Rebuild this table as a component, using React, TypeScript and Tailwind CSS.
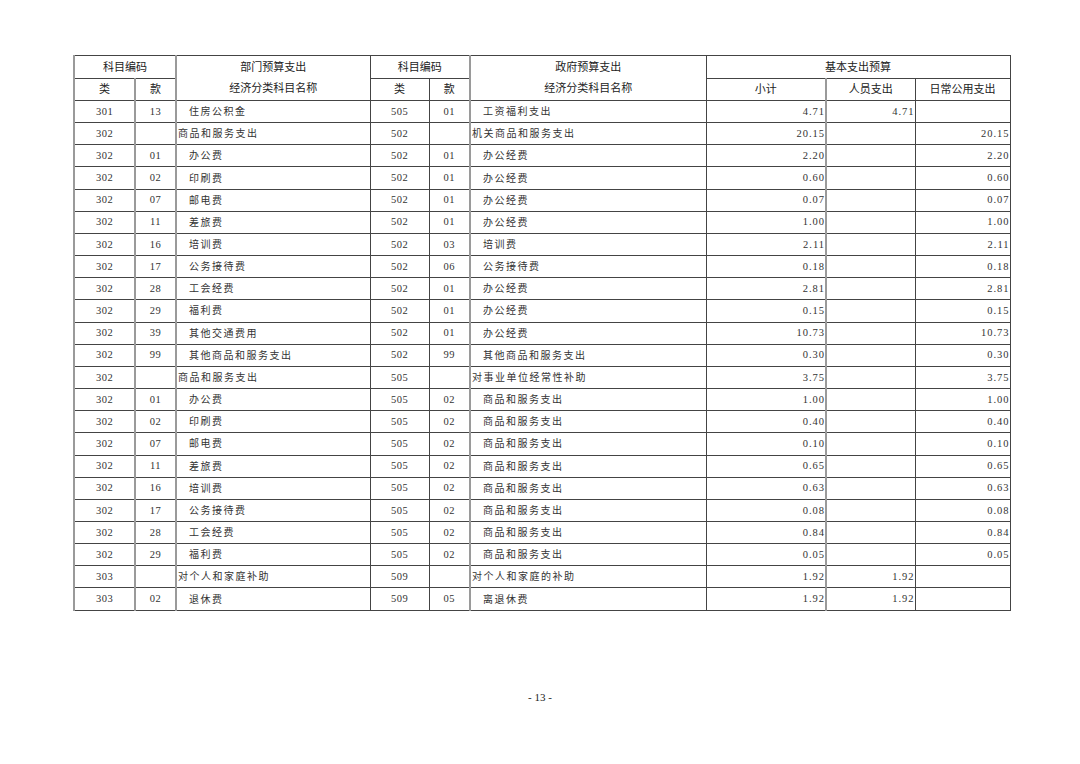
import React from 'react';

type Row = [string, string, string, string, string, string, string, string, string];

// 类, 款, 部门名称, 类, 款, 政府名称, 小计, 人员支出, 日常公用支出
const rows: Row[] = [
  ['301', '13', '住房公积金', '505', '01', '工资福利支出', '4.71', '4.71', ''],
  ['302', '', '商品和服务支出', '502', '', '机关商品和服务支出', '20.15', '', '20.15'],
  ['302', '01', '办公费', '502', '01', '办公经费', '2.20', '', '2.20'],
  ['302', '02', '印刷费', '502', '01', '办公经费', '0.60', '', '0.60'],
  ['302', '07', '邮电费', '502', '01', '办公经费', '0.07', '', '0.07'],
  ['302', '11', '差旅费', '502', '01', '办公经费', '1.00', '', '1.00'],
  ['302', '16', '培训费', '502', '03', '培训费', '2.11', '', '2.11'],
  ['302', '17', '公务接待费', '502', '06', '公务接待费', '0.18', '', '0.18'],
  ['302', '28', '工会经费', '502', '01', '办公经费', '2.81', '', '2.81'],
  ['302', '29', '福利费', '502', '01', '办公经费', '0.15', '', '0.15'],
  ['302', '39', '其他交通费用', '502', '01', '办公经费', '10.73', '', '10.73'],
  ['302', '99', '其他商品和服务支出', '502', '99', '其他商品和服务支出', '0.30', '', '0.30'],
  ['302', '', '商品和服务支出', '505', '', '对事业单位经常性补助', '3.75', '', '3.75'],
  ['302', '01', '办公费', '505', '02', '商品和服务支出', '1.00', '', '1.00'],
  ['302', '02', '印刷费', '505', '02', '商品和服务支出', '0.40', '', '0.40'],
  ['302', '07', '邮电费', '505', '02', '商品和服务支出', '0.10', '', '0.10'],
  ['302', '11', '差旅费', '505', '02', '商品和服务支出', '0.65', '', '0.65'],
  ['302', '16', '培训费', '505', '02', '商品和服务支出', '0.63', '', '0.63'],
  ['302', '17', '公务接待费', '505', '02', '商品和服务支出', '0.08', '', '0.08'],
  ['302', '28', '工会经费', '505', '02', '商品和服务支出', '0.84', '', '0.84'],
  ['302', '29', '福利费', '505', '02', '商品和服务支出', '0.05', '', '0.05'],
  ['303', '', '对个人和家庭补助', '509', '', '对个人和家庭的补助', '1.92', '1.92', ''],
  ['303', '02', '退休费', '509', '05', '离退休费', '1.92', '1.92', ''],
];

const serif = "font-['Liberation_Serif','Noto_Sans_CJK_SC',serif]";
const sans = "font-['Liberation_Sans','Noto_Sans_CJK_SC',sans-serif]";

// left edge of each column: gray double-width or dark hairline
const grayL = 'border-l-2 border-l-[#9a9a9a]';
const darkL = 'border-l border-l-[#444]';

const head = `border-y border-y-[#444] border-r border-r-[#444] text-center text-[11px] text-[#222] font-normal ${sans}`;
const base = `border-y border-y-[#444] border-r border-r-[#444] text-[#333] ${serif}`;
const text = `${base} text-[10px] tracking-[1.5px]`;
const code = `${base} text-[10.5px] tracking-[0.5px] text-center`;
const money = `${base} text-[10.5px] tracking-[1px] text-right pr-0`;

export default function App() {
  return (
    <div className="min-h-[764px] w-[1080px] bg-white pt-[55px]">
      <table className="ml-[73px] w-[936px] table-fixed border-collapse">
        <colgroup>
          <col className="w-[61px]" />
          <col className="w-[41px]" />
          <col className="w-[194px]" />
          <col className="w-[59px]" />
          <col className="w-[41px]" />
          <col className="w-[236px]" />
          <col className="w-[120px]" />
          <col className="w-[89px]" />
          <col className="w-[95px]" />
        </colgroup>
        <thead>
          <tr className="h-[22.5px]">
            <th colSpan={2} className={`${head} ${grayL}`}>科目编码</th>
            <th rowSpan={2} className={`${head} ${grayL} leading-[21px]`}>
              部门预算支出
              <br />
              经济分类科目名称
            </th>
            <th colSpan={2} className={`${head} ${darkL}`}>科目编码</th>
            <th rowSpan={2} className={`${head} ${grayL} leading-[21px]`}>
              政府预算支出
              <br />
              经济分类科目名称
            </th>
            <th colSpan={3} className={`${head} ${darkL}`}>基本支出预算</th>
          </tr>
          <tr className="h-[22.5px]">
            <th className={`${head} ${grayL}`}>类</th>
            <th className={`${head} ${grayL}`}>款</th>
            <th className={`${head} ${darkL}`}>类</th>
            <th className={`${head} ${darkL}`}>款</th>
            <th className={`${head} ${darkL}`}>小计</th>
            <th className={`${head} ${grayL}`}>人员支出</th>
            <th className={`${head} ${darkL}`}>日常公用支出</th>
          </tr>
        </thead>
        <tbody>
          {rows.map((r, i) => {
            const subA = r[1] !== '';
            const subB = r[4] !== '';
            return (
              <tr key={i} className="h-[22.17px]">
                <td className={`${code} ${grayL}`}>{r[0]}</td>
                <td className={`${code} ${grayL}`}>{r[1]}</td>
                <td className={`${text} ${grayL} ${subA ? 'pl-[12px]' : 'pl-px'}`}>{r[2]}</td>
                <td className={`${code} ${darkL}`}>{r[3]}</td>
                <td className={`${code} ${darkL}`}>{r[4]}</td>
                <td className={`${text} ${grayL} ${subB ? 'pl-[12px]' : 'pl-px'}`}>{r[5]}</td>
                <td className={`${money} ${darkL}`}>{r[6]}</td>
                <td className={`${money} ${grayL}`}>{r[7]}</td>
                <td className={`${money} ${darkL}`}>{r[8]}</td>
              </tr>
            );
          })}
        </tbody>
      </table>
      <div className={`mt-[78px] text-center text-[11px] text-[#222] ${serif}`}>- 13 -</div>
    </div>
  );
}
